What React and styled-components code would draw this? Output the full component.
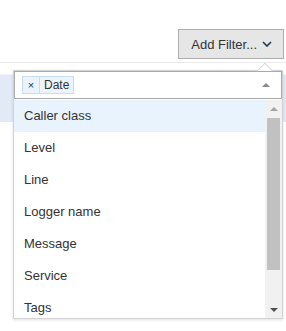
import React from 'react';
import styled, { createGlobalStyle } from 'styled-components';

const GlobalStyle = createGlobalStyle`
  html, body {
    margin: 0;
    padding: 0;
    background: #ffffff;
    font-family: "Liberation Sans", Arial, sans-serif;
  }
`;

const Page = styled.div`
  position: relative;
  width: 286px;
  height: 331px;
  overflow: hidden;
`;

const Toolbar = styled.div`
  display: flex;
  justify-content: flex-end;
  align-items: flex-start;
  height: 63px;
  padding: 29px 2px 0 0;
  box-sizing: border-box;
  border-bottom: 1px solid #ebebeb;
`;

const FilterButton = styled.button`
  display: flex;
  align-items: center;
  gap: 5px;
  height: 30px;
  padding: 0 11px 0 12px;
  background: #e6e6e6;
  border: 1px solid #adadad;
  border-radius: 0;
  font-family: "Liberation Sans", Arial, sans-serif;
  font-size: 13px;
  color: #333333;
`;

const Table = styled.div`
  padding-top: 11px;
`;

const Row = styled.div`
  height: 47px;
  background: ${p => (p.$selected ? '#e2eaf6' : '#ffffff')};
  border-top: 1px solid #eef2f8;
`;

const Popover = styled.div`
  position: absolute;
  top: 70px;
  left: 13px;
  width: 270px;
  background: #ffffff;
  border: 1px solid #d2d2d2;
  box-sizing: border-box;
  box-shadow: 0 1px 3px rgba(0, 0, 0, 0.12);
`;

const Notch = styled.div`
  position: absolute;
  top: -6px;
  right: 11px;
  width: 11px;
  height: 11px;
  background: #ffffff;
  border-top: 1px solid #d8d8d8;
  border-left: 1px solid #d8d8d8;
  transform: rotate(45deg);
`;

const SelectBox = styled.div`
  position: relative;
  display: flex;
  align-items: center;
  height: 28px;
  padding: 0 0 0 7px;
  border: 1px solid #aaaaaa;
  box-sizing: border-box;
  margin-bottom: 1px;
`;

const Tag = styled.div`
  display: flex;
  align-items: stretch;
  height: 18px;
  background: #ebf4fd;
  border: 1px solid #c7ddf3;
  box-sizing: border-box;
  font-size: 12px;
  color: #333333;
`;

const TagRemove = styled.span`
  display: flex;
  align-items: center;
  justify-content: center;
  width: 16px;
  font-size: 11px;
  border-right: 1px solid #c7ddf3;
`;

const TagLabel = styled.span`
  display: flex;
  align-items: center;
  padding: 0 4px 0 4px;
`;

const Caret = styled.span`
  position: absolute;
  right: 11px;
  top: 11px;
  width: 0;
  height: 0;
  border-left: 4px solid transparent;
  border-right: 4px solid transparent;
  border-bottom: 4px solid #8a8a8a;
`;

const ListWrap = styled.div`
  display: flex;
  height: 218px;
`;

const Items = styled.ul`
  flex: 1;
  margin: 0;
  padding: 0;
  list-style: none;
  overflow: hidden;
`;

const Item = styled.li`
  height: 32px;
  line-height: 32px;
  padding-left: 10px;
  font-size: 13px;
  color: #333333;
  background: ${p => (p.$active ? '#e9f3fd' : 'transparent')};
`;

const Scrollbar = styled.div`
  display: flex;
  flex-direction: column;
  width: 17px;
  background: #f1f1f1;
`;

const ScrollArrow = styled.div`
  display: flex;
  align-items: center;
  justify-content: center;
  height: 17px;

  &::before {
    content: '';
    width: 0;
    height: 0;
    border-left: 4px solid transparent;
    border-right: 4px solid transparent;
    ${p =>
      p.$down
        ? 'border-top: 4px solid #505050;'
        : 'border-bottom: 4px solid #a3a3a3;'}
  }
`;

const Track = styled.div`
  flex: 1;
  padding: 1px 2px;
`;

const Thumb = styled.div`
  height: 152px;
  background: #c1c1c1;
`;

const Chevron = () => (
  <svg width="10" height="6" viewBox="0 0 10 6">
    <path d="M1 1 L5 5 L9 1" fill="none" stroke="#1f3550" strokeWidth="1.6" />
  </svg>
);

const fields = ['Caller class', 'Level', 'Line', 'Logger name', 'Message', 'Service', 'Tags'];

export default function App() {
  return (
    <Page>
      <GlobalStyle />
      <Toolbar>
        <FilterButton>
          Add Filter...
          <Chevron />
        </FilterButton>
      </Toolbar>
      <Table>
        <Row $selected />
      </Table>
      <Popover>
        <Notch />
        <SelectBox>
          <Tag>
            <TagRemove>×</TagRemove>
            <TagLabel>Date</TagLabel>
          </Tag>
          <Caret />
        </SelectBox>
        <ListWrap>
          <Items>
            {fields.map((f, i) => (
              <Item key={f} $active={i === 0}>{f}</Item>
            ))}
          </Items>
          <Scrollbar>
            <ScrollArrow />
            <Track>
              <Thumb />
            </Track>
            <ScrollArrow $down />
          </Scrollbar>
        </ListWrap>
      </Popover>
    </Page>
  );
}
